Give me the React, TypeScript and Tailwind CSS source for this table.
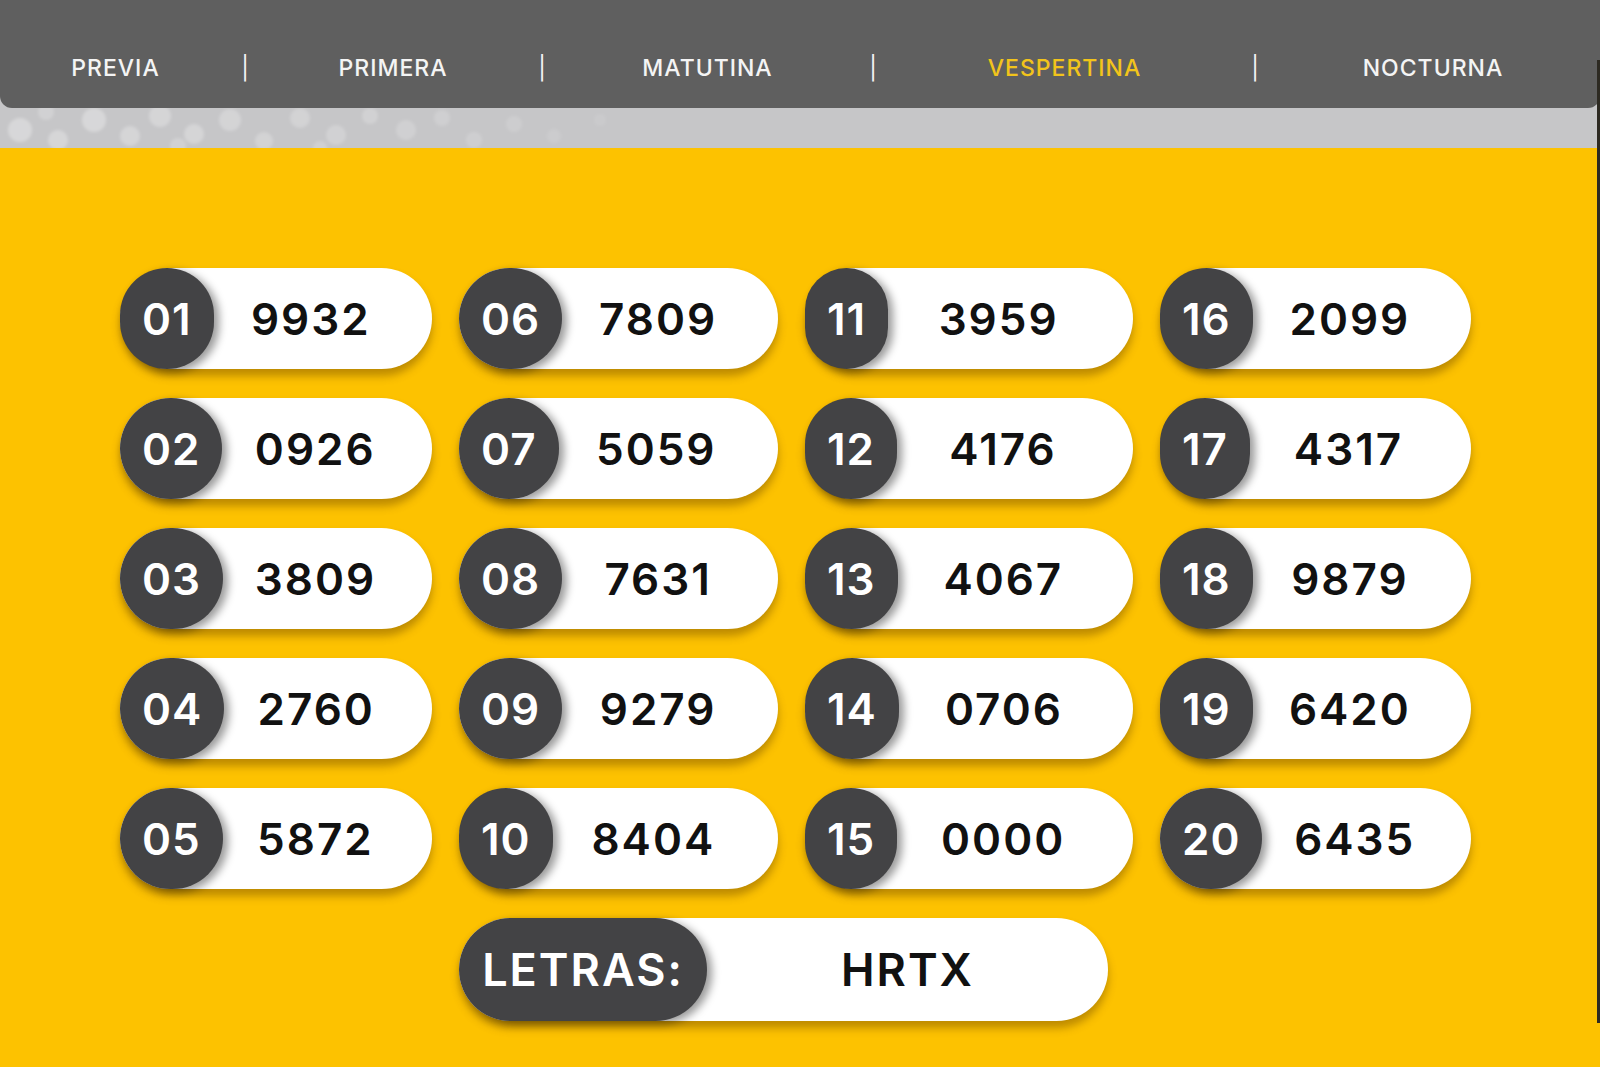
const tabs = [
  { label: "PREVIA", w: "w-[231px]" },
  { label: "|", w: "w-[28px]" },
  { label: "PRIMERA", w: "w-[268px]" },
  { label: "|", w: "w-[30px]" },
  { label: "MATUTINA", w: "w-[301px]" },
  { label: "|", w: "w-[30px]" },
  { label: "VESPERTINA", w: "w-[353px]", active: true },
  { label: "|", w: "w-[28px]" },
  { label: "NOCTURNA", w: "w-[328px]" },
];

const results = [
  ["01", "9932"], ["02", "0926"], ["03", "3809"], ["04", "2760"], ["05", "5872"],
  ["06", "7809"], ["07", "5059"], ["08", "7631"], ["09", "9279"], ["10", "8404"],
  ["11", "3959"], ["12", "4176"], ["13", "4067"], ["14", "0706"], ["15", "0000"],
  ["16", "2099"], ["17", "4317"], ["18", "9879"], ["19", "6420"], ["20", "6435"],
];

const dots = [
  [20, 22, 12, 0.3], [58, 32, 10, 0.28], [94, 12, 12, 0.3], [130, 28, 10, 0.26], [160, 8, 11, 0.26],
  [194, 26, 10, 0.26], [230, 12, 11, 0.24], [264, 33, 9, 0.22], [300, 10, 10, 0.22], [336, 27, 10, 0.2],
  [370, 8, 8, 0.2], [406, 22, 10, 0.18], [442, 10, 8, 0.16], [474, 32, 8, 0.15], [514, 16, 8, 0.13],
  [554, 28, 7, 0.1], [600, 12, 6, 0.08], [46, 4, 8, 0.2], [178, 38, 8, 0.2], [320, 40, 7, 0.18],
];

function Pill({ n, v }: { n: string; v: string }) {
  return (
    <div className="flex h-[101px] items-center rounded-full bg-white shadow-[0_7px_9px_rgba(110,70,0,0.45)]">
      <div className="flex h-full min-w-[82px] items-center justify-center rounded-full bg-[#434345] px-[22px] text-[44px] font-semibold tracking-[1px] text-white shadow-[5px_3px_9px_rgba(0,0,0,0.4)]">
        {n}
      </div>
      <div className="flex-1 pr-[24px] text-center text-[44px] font-semibold tracking-[2px] text-[#111111]">
        {v}
      </div>
    </div>
  );
}

export default function App() {
  return (
    <div className="relative flex min-h-screen flex-col bg-[#fdc200] font-['Inter',sans-serif]">
      <header className="bg-[#c6c6c8]">
        <nav className="flex h-[108px] items-center rounded-b-[12px] bg-[#5f5f5f] pt-[28px]">
          {tabs.map((t, i) => (
            <div
              key={i}
              className={`${t.w} text-center text-[23px] ${t.label === "|" ? "font-normal" : "font-medium tracking-[1px]"} ${t.active ? "text-[#f2c41b]" : "text-[#f4f4f4]"}`}
            >
              {t.label}
            </div>
          ))}
        </nav>
        <svg width="1600" height="40" className="block">
          <defs>
            <filter id="soft">
              <feGaussianBlur stdDeviation="1.5" />
            </filter>
          </defs>
          <g filter="url(#soft)">
            {dots.map(([x, y, r, o], i) => (
              <circle key={i} cx={x} cy={y} r={r} fill="#ffffff" opacity={o} />
            ))}
          </g>
        </svg>
      </header>

      <main className="flex-1 pl-[120px] pt-[120px]">
        <div className="grid grid-flow-col grid-cols-[312px_319px_328px_311px] grid-rows-[repeat(5,101px)] gap-x-[27px] gap-y-[29px]">
          {results.map(([n, v]) => (
            <Pill key={n} n={n} v={v} />
          ))}
        </div>

        <div className="ml-[339px] mt-[29px] flex h-[103px] w-[649px] items-center rounded-full bg-white shadow-[0_7px_9px_rgba(110,70,0,0.45)]">
          <div className="flex h-full w-[248px] items-center justify-center rounded-full bg-[#434345] text-[45px] font-semibold tracking-[2px] text-white shadow-[5px_3px_9px_rgba(0,0,0,0.4)]">
            LETRAS:
          </div>
          <div className="flex-1 text-center text-[45px] font-semibold tracking-[2px] text-[#111111]">HRTX</div>
        </div>
      </main>

      <div className="absolute right-0 top-[60px] h-[963px] w-[3px] bg-[#2d2a22]" />
    </div>
  );
}
